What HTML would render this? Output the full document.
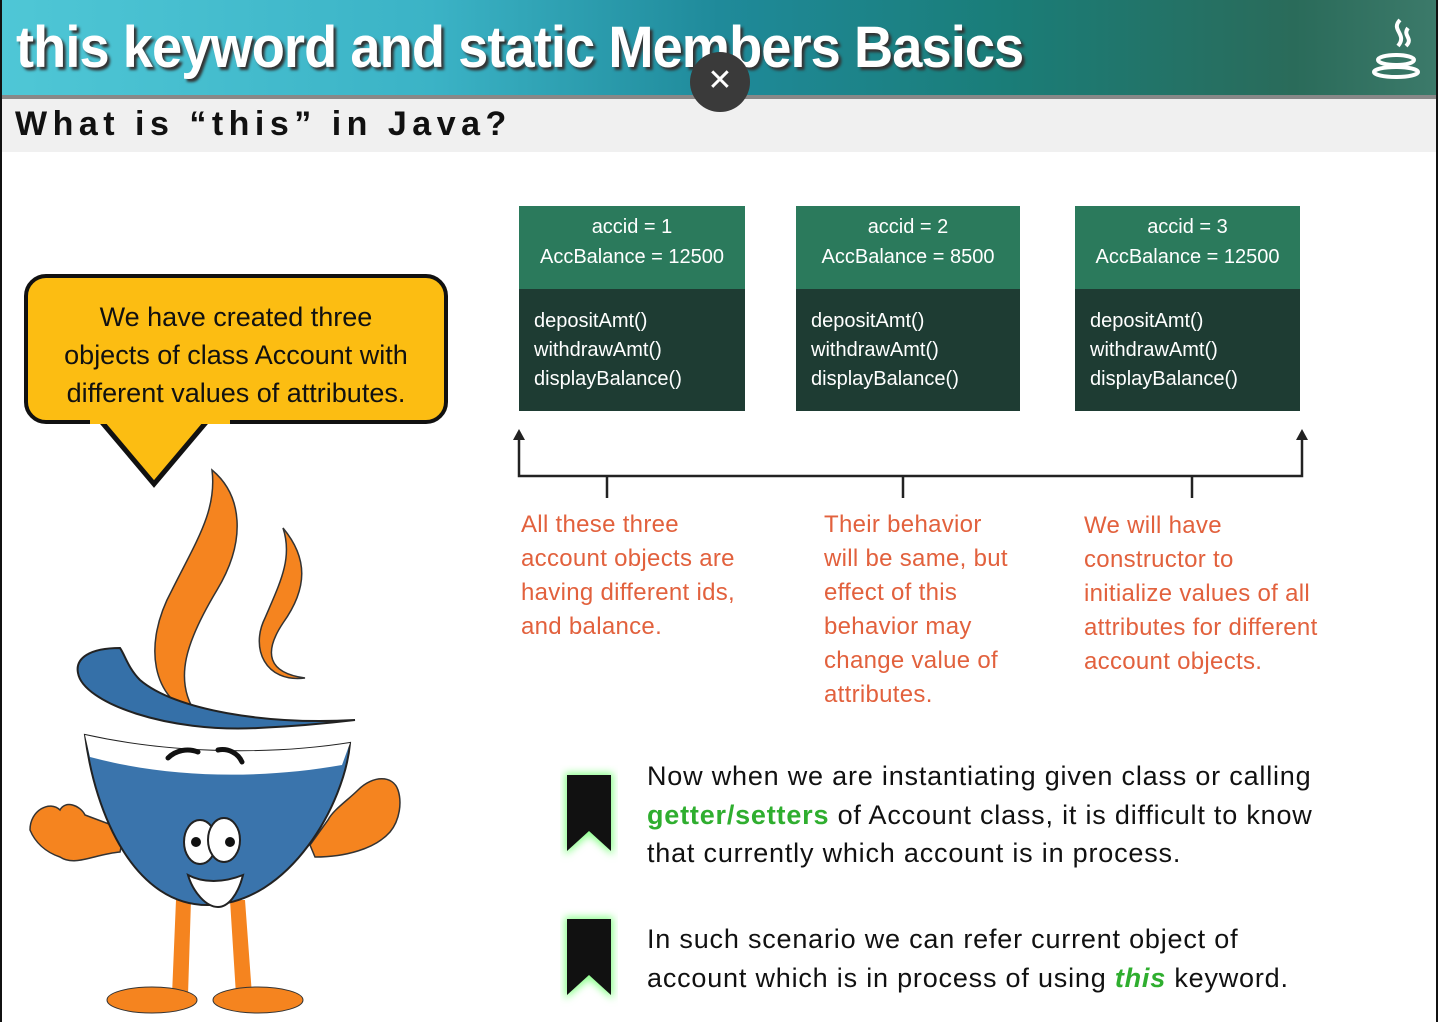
<!DOCTYPE html><html><head><style>
body{margin:0;width:1438px;height:1022px;background:#fff;position:relative;overflow:hidden;font-family:"Liberation Sans",sans-serif}
.hdr{position:absolute;left:0;top:0;width:1438px;height:95px;background:linear-gradient(90deg,#4fc7d6 0%,#3bb3c6 30%,#1f8a9a 50%,#1a7d78 70%,#2a6b5a 90%,#3c7a6a 100%)}
.hdr h1{position:absolute;left:16px;top:14px;margin:0;font:bold 58px "Liberation Sans",sans-serif;color:#fff;letter-spacing:-1px;transform:scaleX(.935);transform-origin:left;text-shadow:3px 3px 3px #333}
.sub{position:absolute;left:0;top:95px;width:1438px;height:57px;background:#f0f0f0;border-top:4px solid #888;box-sizing:border-box}
.sub div{position:absolute;left:15px;top:6px;font:bold 34px "Liberation Sans",sans-serif;letter-spacing:5.5px;color:#111}
.x{position:absolute;left:690px;top:52px;width:60px;height:60px;border-radius:50%;background:#3a3a3a;color:#fff;font-size:30px;text-align:center;line-height:58px}
.box{position:absolute;top:206px;width:226px;height:205px;background:#1e3c33;color:#fff;font-size:20px}
.box .t{height:83px;background:#2b7a5c;text-align:center;padding-top:6px;box-sizing:border-box;line-height:30px}
.box .b{padding:18px 0 0 15px;line-height:29px}
.o{position:absolute;color:#e2613d;font-size:24px;line-height:34px;letter-spacing:.3px}
.bt{position:absolute;left:647px;font-size:27px;line-height:38.5px;color:#111;letter-spacing:.8px}
.g{color:#2fae2f;font-weight:bold}
.bub{position:absolute;left:24px;top:274px;width:424px;height:150px;background:#fcbd12;border:4px solid #111;border-radius:22px;box-sizing:border-box;text-align:center;font-size:27px;line-height:38px;padding-top:20px;color:#111}
</style></head><body>
<div class="hdr"><h1>this keyword and static Members Basics</h1>
<svg style="position:absolute;left:1370px;top:18px" width="56" height="62"><path d="M30 2c-10 10 8 14-2 26M38 10c-6 8 6 10-2 18" stroke="#fff" stroke-width="4" fill="none"/><ellipse cx="26" cy="42" rx="18" ry="5" fill="none" stroke="#fff" stroke-width="4"/><ellipse cx="26" cy="54" rx="22" ry="5" fill="none" stroke="#fff" stroke-width="4"/></svg></div>
<div class="sub"><div>What is “this” in Java?</div></div>
<div class="x">✕</div>
<div class="bub">We have created three<br>objects of class Account with<br>different values of attributes.</div>
<svg style="position:absolute;left:90px;top:418px" width="140" height="72"><polygon points="10,2 64,66 118,2" fill="#fcbd12" stroke="#111" stroke-width="5"/><rect x="0" y="0" width="140" height="6" fill="#fcbd12"/></svg>
<svg style="position:absolute;left:0;top:0" width="450" height="1022">
<g stroke="#333" stroke-width="1.5">
<path d="M212 470c30 25 35 70 5 120-30 50-45 90 -20 125 -45-15-55-70-25-125 25-50 45-80 40-120z" fill="#f5841f"/>
<path d="M283 528c25 30 25 60 0 95-20 30-15 50 22 55 -40 5-55-30-40-60 15-35 28-60 18-90z" fill="#f5841f"/>
<path d="M120 648c-30 0-45 10-42 25 5 30 90 60 180 55 45-2 80-6 97-8 -90 5-180-10-215-40-12-12-15-25-20-32z" fill="#3570a8" stroke="#222" stroke-width="2"/>
<path d="M30 830c0-20 20-30 30-20 5-10 20-5 25 5l40 15 -5 22c-25 2-45 15-60 5-15-5-25-15-30-27z" fill="#f5841f"/>
<path d="M398 790c-5-15-25-15-40 0-10 10-25 20-30 30l-18 25 5 12c30 0 60-8 75-25 10-12 12-30 8-42z" fill="#f5841f"/>
<path d="M176 900l-4 95h16l3-95zM230 900l6 95h16l-7-95z" fill="#f5841f" stroke="none"/>
</g>
<path d="M85 735c90 20 190 20 265 8-5 60-60 160-140 162-75 2-115-90-125-170z" fill="#3a74ac" stroke="#222" stroke-width="2"/>
<path d="M85 735c90 20 190 20 265 8l-8 22c-80 14-170 14-252 -8z" fill="#fff"/>
<path d="M168 758c8-8 20-10 30-6M218 750c10-2 20 3 24 12" stroke="#111" stroke-width="5" fill="none" stroke-linecap="round"/>
<ellipse cx="200" cy="842" rx="16" ry="22" fill="#fff" stroke="#222" stroke-width="2"/><ellipse cx="224" cy="840" rx="16" ry="22" fill="#fff" stroke="#222" stroke-width="2"/>
<circle cx="196" cy="842" r="5" fill="#111"/><circle cx="230" cy="842" r="5" fill="#111"/>
<path d="M188 875c15 8 35 8 55 0-5 20-15 32-25 32-12 0-25-15-30-32z" fill="#fff" stroke="#222" stroke-width="2"/>
<ellipse cx="152" cy="1000" rx="45" ry="13" fill="#f5841f" stroke="#333"/><ellipse cx="258" cy="1000" rx="45" ry="13" fill="#f5841f" stroke="#333"/>
</svg>
<div class="box" style="left:519px"><div class="t">accid = 1<br>AccBalance = 12500</div><div class="b">depositAmt()<br>withdrawAmt()<br>displayBalance()</div></div>
<div class="box" style="left:796px;width:224px"><div class="t">accid = 2<br>AccBalance = 8500</div><div class="b">depositAmt()<br>withdrawAmt()<br>displayBalance()</div></div>
<div class="box" style="left:1075px;width:225px"><div class="t">accid = 3<br>AccBalance = 12500</div><div class="b">depositAmt()<br>withdrawAmt()<br>displayBalance()</div></div>
<svg style="position:absolute;left:0;top:0" width="1438" height="1022"><g stroke="#222" stroke-width="2.5" fill="none"><path d="M519 438V476H1302V438M607 476V498M903 476V498M1192 476V498"/></g><path d="M513 440L519 429L525 440zM1296 440L1302 429L1308 440z" fill="#222"/></svg>
<div class="o" style="left:521px;top:508px">All these three<br>account objects are<br>having different ids,<br>and balance.</div>
<div class="o" style="left:824px;top:508px">Their behavior<br>will be same, but<br>effect of this<br>behavior may<br>change value of<br>attributes.</div>
<div class="o" style="left:1084px;top:509px">We will have<br>constructor to<br>initialize values of all<br>attributes for different<br>account objects.</div>
<svg style="position:absolute;left:555px;top:765px" width="70" height="245"><defs><filter id="f"><feGaussianBlur stdDeviation="4"/></filter></defs>
<path d="M10 8h48v82l-24-20-24 20z" fill="#8f8" filter="url(#f)"/><path d="M12 10h44v76l-22-20-22 20z" fill="#111"/>
<path d="M10 152h48v82l-24-20-24 20z" fill="#8f8" filter="url(#f)"/><path d="M12 154h44v76l-22-20-22 20z" fill="#111"/></svg>
<div class="bt" style="top:757px">Now when we are instantiating given class or calling<br><span class="g">getter/setters</span> of Account class, it is difficult to know<br>that currently which account is in process.</div>
<div class="bt" style="top:920px">In such scenario we can refer current object of<br>account which is in process of using <span class="g"><i>this</i></span> keyword.</div>
<div style="position:absolute;left:0;top:0;width:2px;height:1022px;background:#111"></div>
<div style="position:absolute;right:0;top:0;width:2px;height:1022px;background:#111"></div>
</body></html>
